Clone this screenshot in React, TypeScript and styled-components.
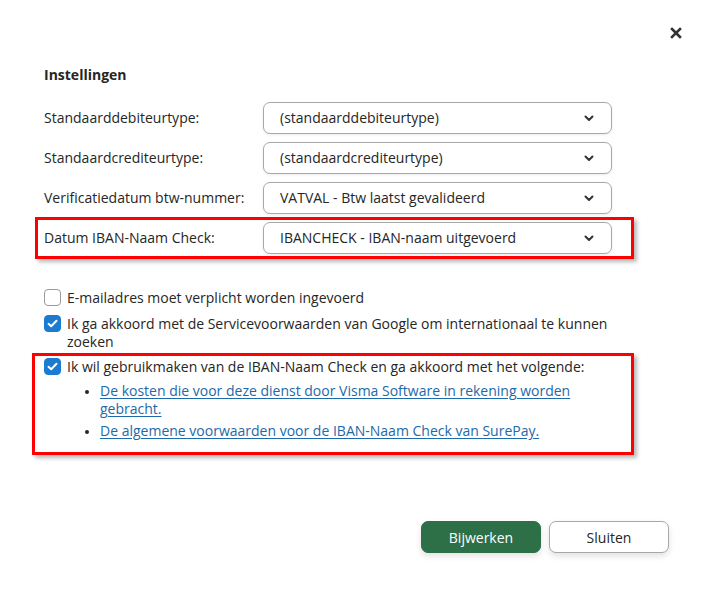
import React from "react";
import styled, { createGlobalStyle } from "styled-components";

const Global = createGlobalStyle`
  html, body { margin: 0; padding: 0; background: #ffffff; }
  body { font-family: "Open Sans", "Liberation Sans", sans-serif; font-size: 14px; color: #252626; }
  * { box-sizing: border-box; }
`;

const Dialog = styled.div`
  width: 711px;
  height: 596px;
  background: #fff;
  display: flex;
  flex-direction: column;
  padding: 0 43px 0 44px;
`;

const Header = styled.div`
  height: 66px;
  display: flex;
  justify-content: flex-end;
  align-items: flex-start;
  padding-top: 26px;
  margin-right: -15px;
`;

const CloseButton = styled.button`
  width: 14px;
  height: 14px;
  padding: 0;
  border: none;
  background: transparent;
  display: flex;
  align-items: center;
  justify-content: center;
  cursor: pointer;
`;

const Title = styled.h2`
  margin: 0;
  font-size: 14px;
  line-height: 18px;
  font-weight: 700;
  color: #252626;
`;

const Form = styled.div`
  display: flex;
  flex-direction: column;
  align-items: flex-start;
  gap: 8px;
  margin-top: 18px;
`;

const Row = styled.div`
  display: flex;
  align-items: center;
`;

const Highlight = styled.div<{ $left: number; $right: number; $top: number; $pad: string }>`
  border: 3px solid #ff0000;
  margin: ${(p) => p.$top}px -${(p) => p.$right}px 0 -${(p) => p.$left}px;
  padding: ${(p) => p.$pad};
  box-shadow: 3px 3px 4px rgba(0, 0, 0, 0.28);
`;

const Label = styled.label`
  width: 219px;
  line-height: 18px;
`;

const Select = styled.div`
  width: 349px;
  height: 32px;
  border: 1px solid #a8a8a8;
  border-radius: 7px;
  padding: 0 17px 0 16px;
  display: flex;
  align-items: center;
  justify-content: space-between;
  background: #fff;
  box-shadow: 0 1px 3px rgba(0, 0, 0, 0.08);
`;

const SelectValue = styled.span`
  line-height: 18px;
  color: #252626;
`;

const Checks = styled.div`
  width: 576px;
  display: flex;
  flex-direction: column;
  gap: 8px;
  margin-top: 30px;
`;

const CheckRow = styled.div`
  display: flex;
  align-items: flex-start;
  gap: 6px;
  line-height: 18px;
`;

const Box = styled.span<{ $checked?: boolean }>`
  flex: 0 0 17px;
  width: 17px;
  height: 17px;
  border-radius: 4px;
  border: 1px solid ${(p) => (p.$checked ? "#1b7bd0" : "#9a9a9a")};
  background: ${(p) => (p.$checked ? "#1b7bd0" : "#fff")};
  display: flex;
  align-items: center;
  justify-content: center;
`;

const CheckText = styled.div`
  flex: 1;
`;

const LinkList = styled.ul`
  margin: 6px 0 0 0;
  padding: 0 0 0 33px;
  display: flex;
  flex-direction: column;
  gap: 4px;
  list-style: disc;
`;

const LinkItem = styled.li`
  line-height: 18px;
  &::marker { color: #252626; font-size: 12px; }
`;

const Link = styled.a`
  color: #1c6aa9;
  text-decoration: underline;
  text-underline-offset: 2px;
`;

const Footer = styled.div`
  margin-top: auto;
  margin-bottom: 43px;
  margin-right: -1px;
  display: flex;
  justify-content: flex-end;
  gap: 8px;
`;

const Button = styled.button<{ $primary?: boolean }>`
  width: 120px;
  height: 32px;
  border-radius: 7px;
  font-family: "Open Sans", "Liberation Sans", sans-serif;
  font-size: 14px;
  cursor: pointer;
  border: 1px solid ${(p) => (p.$primary ? "#2d7048" : "#a8a8a8")};
  background: ${(p) => (p.$primary ? "#2d7048" : "#fff")};
  color: ${(p) => (p.$primary ? "#fff" : "#252626")};
  box-shadow: 0 3px 6px rgba(0, 0, 0, 0.12);
`;

const Chevron = () => (
  <svg width="10" height="7" viewBox="0 0 10 7">
    <polyline points="1.5,1.5 5,5 8.5,1.5" fill="none" stroke="#333" strokeWidth="2" strokeLinecap="round" strokeLinejoin="round" />
  </svg>
);

const Tick = () => (
  <svg width="11" height="9" viewBox="0 0 11 9">
    <polyline points="1.5,4.8 4.2,7.2 9.5,1.8" fill="none" stroke="#fff" strokeWidth="2" strokeLinecap="round" strokeLinejoin="round" />
  </svg>
);

const SelectRow = ({ label, value }: { label: string; value: string }) => (
  <Row>
    <Label>{label}</Label>
    <Select>
      <SelectValue>{value}</SelectValue>
      <Chevron />
    </Select>
  </Row>
);

export default function App() {
  return (
    <>
      <Global />
      <Dialog>
        <Header>
          <CloseButton aria-label="Sluiten">
            <svg width="12" height="12" viewBox="0 0 12 12">
              <path d="M2 2 L10 10 M10 2 L2 10" stroke="#333" strokeWidth="2.6" strokeLinecap="square" />
            </svg>
          </CloseButton>
        </Header>
        <Title>Instellingen</Title>
        <Form>
          <SelectRow label="Standaarddebiteurtype:" value="(standaarddebiteurtype)" />
          <SelectRow label="Standaardcrediteurtype:" value="(standaardcrediteurtype)" />
          <SelectRow label="Verificatiedatum btw-nummer:" value="VATVAL - Btw laatst gevalideerd" />
          <Highlight $left={9} $right={0} $top={-5} $pad="2px 19px 2px 6px">
            <SelectRow label="Datum IBAN-Naam Check:" value="IBANCHECK - IBAN-naam uitgevoerd" />
          </Highlight>
        </Form>
        <Checks>
          <CheckRow>
            <Box />
            <CheckText>E-mailadres moet verplicht worden ingevoerd</CheckText>
          </CheckRow>
          <CheckRow>
            <Box $checked>
              <Tick />
            </Box>
            <CheckText>
              Ik ga akkoord met de Servicevoorwaarden van Google om internationaal te kunnen zoeken
            </CheckText>
          </CheckRow>
          <Highlight $left={12} $right={14} $top={-6} $pad="2px 11px 12px 9px">
            <CheckRow>
              <Box $checked>
                <Tick />
              </Box>
              <CheckText>
                Ik wil gebruikmaken van de IBAN-Naam Check en ga akkoord met het volgende:
                <LinkList>
                  <LinkItem>
                    <Link href="#">
                      De kosten die voor deze dienst door Visma Software in rekening worden gebracht.
                    </Link>
                  </LinkItem>
                  <LinkItem>
                    <Link href="#">De algemene voorwaarden voor de IBAN-Naam Check van SurePay.</Link>
                  </LinkItem>
                </LinkList>
              </CheckText>
            </CheckRow>
          </Highlight>
        </Checks>
        <Footer>
          <Button $primary>Bijwerken</Button>
          <Button>Sluiten</Button>
        </Footer>
      </Dialog>
    </>
  );
}
